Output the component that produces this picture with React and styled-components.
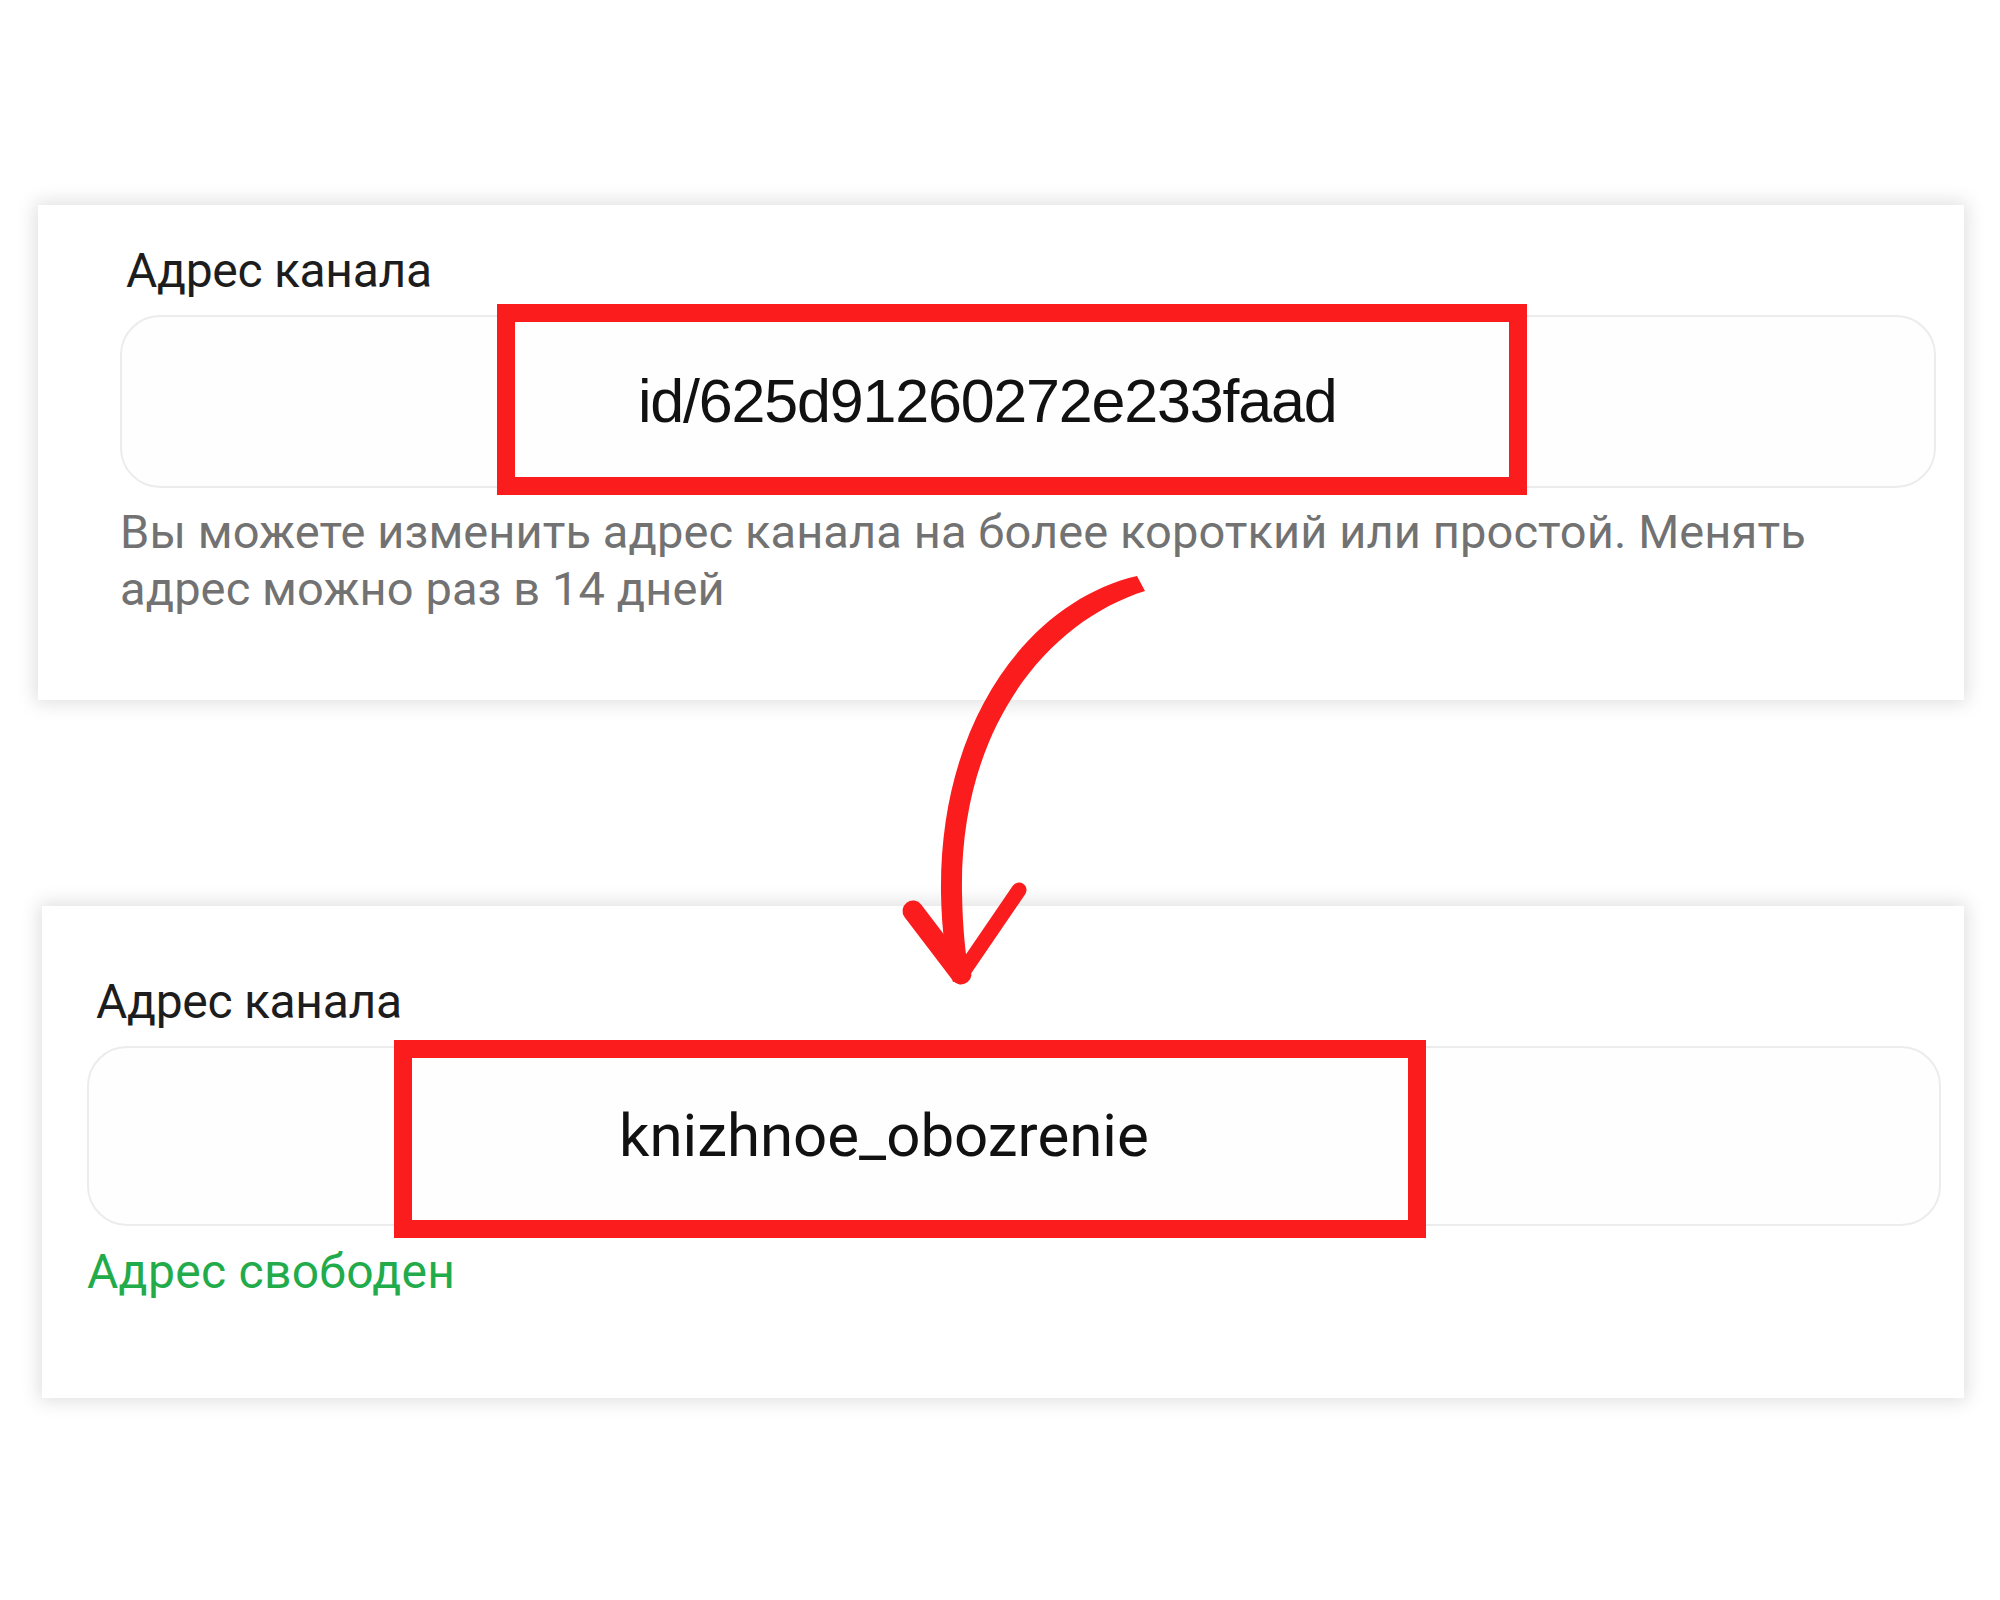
import React from "react";
import styled, { createGlobalStyle } from "styled-components";

const GlobalStyle = createGlobalStyle`
  body {
    margin: 0;
    background: #ffffff;
    font-family: Roboto, "Noto Sans", Arial, sans-serif;
  }
`;

const Page = styled.div`
  position: relative;
  width: 2000px;
  height: 1600px;
  box-sizing: border-box;
  padding-top: 205px;
  display: flex;
  flex-direction: column;
  gap: 206px;
  background: #ffffff;
`;

const Card = styled.section`
  box-sizing: border-box;
  margin-left: ${(p) => p.$left}px;
  margin-right: 36px;
  padding: ${(p) => p.$pad};
  background: #ffffff;
  box-shadow: 0 0 18px 3px rgba(0, 0, 0, 0.13);
  display: flex;
  flex-direction: column;
`;

const Label = styled.div`
  margin-left: ${(p) => p.$indent}px;
  font-size: 48px;
  line-height: 56px;
  color: #1d1d1d;
  letter-spacing: -0.3px;
`;

const Field = styled.div`
  position: relative;
  box-sizing: border-box;
  height: ${(p) => p.$height}px;
  margin-top: 16px;
  padding-left: ${(p) => p.$indent}px;
  border: 2px solid #ececec;
  border-radius: 40px;
  background: #fefefe;
  display: flex;
  align-items: center;
`;

const Value = styled.span`
  font-family: ${(p) => (p.$mono ? '"Liberation Sans", Arial' : "Roboto, \"Noto Sans\"")}, sans-serif;
  font-size: ${(p) => p.$size}px;
  letter-spacing: ${(p) => p.$spacing || 0}px;
  line-height: 1;
  color: #111111;
  white-space: nowrap;
`;

/* annotation frame drawn over the input */
const Highlight = styled.div`
  position: absolute;
  left: ${(p) => p.$x}px;
  top: ${(p) => p.$y}px;
  width: ${(p) => p.$w}px;
  height: ${(p) => p.$h}px;
  box-sizing: border-box;
  border: 18px solid #fb1c1e;
  pointer-events: none;
`;

const Hint = styled.p`
  margin: 15px 0 0;
  font-size: 47px;
  line-height: 57px;
  color: #727272;
  letter-spacing: 0.1px;
`;

const Status = styled.p`
  margin: 18px 0 0;
  font-size: 48px;
  line-height: 56px;
  color: #22ab4b;
  letter-spacing: 0.3px;
`;

const Arrow = styled.svg`
  position: absolute;
  left: 880px;
  top: 560px;
  width: 300px;
  height: 440px;
  z-index: 2;
  overflow: visible;
`;

const CurvedArrow = () => (
  <Arrow viewBox="880 560 300 440">
    <path
      d="M1137 576 C1033 600 939 716 941 893 Q942 950 953 982 L970 979 Q963 945 962 893 C959 730 1046 622 1145 591 Z"
      fill="#fb1c1e"
    />
    <path d="M913 911 L961 974" stroke="#fb1c1e" strokeWidth="21" strokeLinecap="round" fill="none" />
    <path d="M1019 890 L963 972" stroke="#fb1c1e" strokeWidth="15" strokeLinecap="round" fill="none" />
  </Arrow>
);

const App = () => {
  return (
    <>
      <GlobalStyle />
      <Page>
        <Card $left={38} $pad="38px 28px 83px 82px">
          <Label $indent={6}>Адрес канала</Label>
          <Field $height={173} $indent={516}>
            <Value $mono $size={61} $spacing={-1.2}>
              id/625d91260272e233faad
            </Value>
            <Highlight $x={375} $y={-13} $w={1030} $h={191} />
          </Field>
          <Hint>
            Вы можете изменить адрес канала на более короткий или простой. Менять
            <br />
            адрес можно раз в 14 дней
          </Hint>
        </Card>

        <Card $left={42} $pad="68px 23px 98px 45px">
          <Label $indent={9}>Адрес канала</Label>
          <Field $height={180} $indent={530}>
            <Value $size={60}>knizhnoe_obozrenie</Value>
            <Highlight $x={305} $y={-8} $w={1032} $h={198} />
          </Field>
          <Status>Адрес свободен</Status>
        </Card>

        <CurvedArrow />
      </Page>
    </>
  );
};

export default App;
